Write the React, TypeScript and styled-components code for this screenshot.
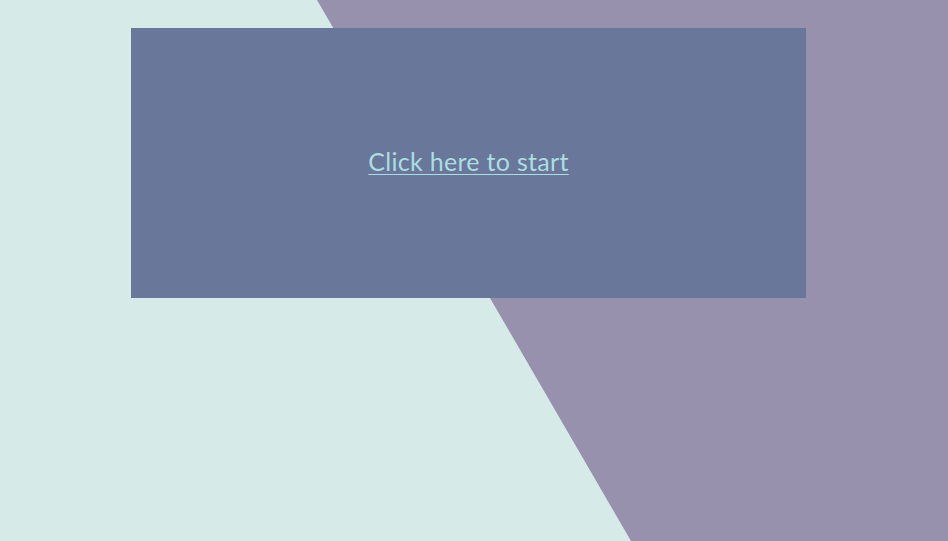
import React from "react";
import styled, { createGlobalStyle } from "styled-components";

const GlobalStyle = createGlobalStyle`
  html, body {
    margin: 0;
    padding: 0;
    width: 100%;
    height: 100%;
    overflow: hidden;
  }
  body {
    background: #d6eae8;
    font-family: "Lato", "Open Sans", sans-serif;
  }
`;

const Page = styled.div`
  position: relative;
  width: 948px;
  height: 541px;
  background: #d6eae8;
  overflow: hidden;

  &::before {
    content: "";
    position: absolute;
    inset: 0;
    background: #9791ae;
    clip-path: polygon(317px 0, 100% 0, 100% 100%, 631px 100%);
  }
`;

const Panel = styled.div`
  position: relative;
  margin: 28px 0 0 131px;
  width: 675px;
  height: 270px;
  background: #69779a;
  display: flex;
  align-items: center;
  justify-content: center;
`;

const StartLink = styled.a`
  color: #acdde0;
  font-family: "Lato", "Open Sans", sans-serif;
  font-size: 25px;
  letter-spacing: 0.3px;
  text-decoration: underline;
  text-underline-offset: 3px;
  text-decoration-thickness: 1px;
  cursor: pointer;
  margin-top: -4px;
`;

export default function App() {
  return (
    <>
      <GlobalStyle />
      <Page>
        <Panel>
          <StartLink href="#">Click here to start</StartLink>
        </Panel>
      </Page>
    </>
  );
}
